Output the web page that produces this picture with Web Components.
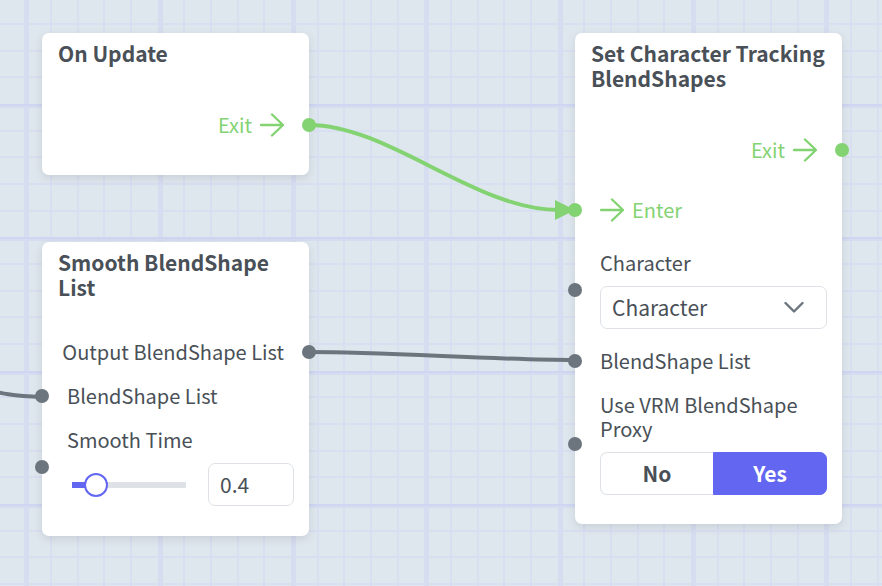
<!DOCTYPE html>
<html lang="en">
<head>
<meta charset="utf-8">
<title>Node graph</title>
<style>
  html, body { height: 100%; margin: 0; }
  body { font-family: "Noto Sans CJK JP", "Noto Sans", sans-serif; font-size: 20px; line-height: 24px; color: #495057; overflow: hidden; }
</style>
</head>
<body>
<graph-canvas>
  <graph-wires slot="wires"></graph-wires>
  <graph-node heading="On Update" style="left:42px;top:33px;height:142px">
    <graph-port side="out" flow>Exit</graph-port>
  </graph-node>
  <graph-node heading="Smooth BlendShape List" style="left:42px;top:242px;height:294px">
    <graph-port side="out">Output BlendShape List</graph-port>
    <graph-port side="in">BlendShape List</graph-port>
    <graph-port side="in">Smooth Time<range-field slot="control" label="Smooth Time" value="0.4" max="3"></range-field></graph-port>
  </graph-node>
  <graph-node heading="Set Character Tracking BlendShapes" style="left:575px;top:33px;height:491px">
    <graph-port side="out" flow>Exit</graph-port>
    <graph-port side="in" flow>Enter</graph-port>
    <graph-port side="in">Character<select-field slot="control" label="Character"></select-field></graph-port>
    <graph-port side="in">BlendShape List</graph-port>
    <graph-port side="in">Use VRM BlendShape Proxy<toggle-field slot="control" label="Use VRM BlendShape Proxy"></toggle-field></graph-port>
  </graph-node>
</graph-canvas>
<script>
  const define = (name, markup, setup) => customElements.define(name, class extends HTMLElement {
    connectedCallback() {
      if (this.shadowRoot) return;
      this.attachShadow({ mode: "open" }).innerHTML = markup;
      if (setup) setup(this, this.shadowRoot);
    }
  });

  // Three grid cells share one tile, so every line stays on a whole pixel.
  const minorColumns = [51, 78, 104, 131, 184, 211, 238, 264, 318, 344, 371, 398];
  const minorRows = [24, 51, 77, 131, 157, 184, 211, 264, 291, 317, 344, 397];
  const grid =
    minorColumns.map(x => `<rect x="${x - 1}" width="2" height="400" fill="#d8dff0"/>`).join("") +
    minorRows.map(y => `<rect y="${y - 1}" width="400" height="2" fill="#d8dff0"/>`).join("") +
    [24, 158, 291].map(x => `<rect x="${x}" width="5" height="400" fill="#d6ddf0"/>`).join("") +
    [104, 237, 371].map(y => `<rect y="${y}" width="400" height="4" fill="#d6ddf1"/><rect y="${y}" width="400" height="2" fill="#ced6f1"/>`).join("");

  define("graph-canvas", `
    <style>
      :host { display: block; position: relative; height: 100%; overflow: hidden; background: #dfe7ee; }
      .grid { position: absolute; inset: 0; width: 100%; height: 100%; }
    </style>
    <svg class="grid" aria-hidden="true"><defs><pattern id="g" width="400" height="400" patternUnits="userSpaceOnUse">${grid}</pattern></defs><rect width="100%" height="100%" fill="url(#g)"/></svg>
    <slot></slot><slot name="wires"></slot>`);

  define("graph-wires", `
    <style>
      :host { position: absolute; inset: 0; z-index: 1; pointer-events: none; }
      svg { width: 100%; height: 100%; display: block; }
      path { fill: none; stroke-width: 4; }
      .tip { fill: #84d373; }
    </style>
    <svg aria-hidden="true">
      <path d="M309 125C389 125 475 210 559 210" stroke="#84d373"/>
      <path class="tip" d="M555 200L575 210L555 220Z"/>
      <path d="M309 352C389 352 495 360 575 360" stroke="#6c757d"/>
      <path d="M-20 388C0 393 10 396 42 397" stroke="#6c757d"/>
    </svg>`);

  define("graph-node", `
    <style>
      :host { position: absolute; box-sizing: border-box; width: 267px; background: #fff; border-radius: 7px; box-shadow: 0 3px 8px #6c757d33; }
      h2 { margin: 0; padding: 8px 12px 40px 16px; font-size: 21px; line-height: 25px; font-weight: 700; }
      .ports { display: flex; flex-direction: column; gap: 20px; }
    </style>
    <h2></h2><div class="ports"><slot></slot></div>`,
    (host, root) => { root.querySelector("h2").textContent = host.getAttribute("heading"); });

  define("graph-port", `
    <style>
      :host { display: block; position: relative; padding: 0 15px 0 25px; --dot: #6c757d; }
      :host([side=out]) { padding-right: 25px; padding-left: 15px; }
      :host([flow]) { color: #84d373; --dot: #84d373; }
      :host([flow][side=out]) { margin-top: 7px; }
      :host([flow][side=in]) { margin: 16px 0 9px; }
      .label { display: flex; align-items: center; gap: 8px; }
      :host([side=out]) .label { justify-content: flex-end; }
      :host([side=out][flow]) .label { flex-direction: row-reverse; justify-content: flex-start; }
      svg { display: none; width: 24px; height: 24px; fill: none; stroke: currentColor; stroke-width: 2.4; stroke-linecap: round; stroke-linejoin: round; }
      :host([flow]) svg { display: block; }
      .dot { position: absolute; left: -7px; top: calc(50% - 7px); width: 14px; height: 14px; border-radius: 50%; background: var(--dot); z-index: 2; }
      :host([side=out]) .dot { left: auto; right: -7px; }
    </style>
    <div class="label"><svg viewBox="0 0 24 24" aria-hidden="true"><path d="M1 12H23M12 1.500L23 12L12 22.500"/></svg><span><slot></slot></span></div>
    <slot name="control"></slot><span class="dot"></span>`);

  const box = "box-sizing: border-box; height: 43px; border: 1px solid #dee2e6; border-radius: 7px; background: #fff; color: inherit; font: inherit; font-size: 21px; outline: 0;";

  define("range-field", `
    <style>
      :host { display: flex; align-items: center; justify-content: space-between; margin-top: 11px; padding-left: 5px; }
      input { margin: 0; }
      .range { appearance: none; width: 114px; height: 24px; background: linear-gradient(90deg, #6366f1 20%, #dee2e6 20%) center / 100% 6px no-repeat; }
      .range::-webkit-slider-thumb { appearance: none; box-sizing: border-box; width: 24px; height: 24px; border: 2px solid #6366f1; border-radius: 50%; background: #fff; }
      .number { ${box} width: 86px; padding: 0 11px 2px; }
    </style>
    <input class="range" type="range" min="0" step="0.1"><input class="number" type="text" inputmode="decimal">`,
    (host, root) => {
      const [range, number] = root.querySelectorAll("input");
      range.max = host.getAttribute("max");
      range.value = number.value = host.getAttribute("value");
      range.ariaLabel = number.ariaLabel = host.getAttribute("label");
      range.oninput = () => { number.value = range.value; };
    });

  define("select-field", `
    <style>
      :host { display: block; position: relative; margin-top: 11px; }
      select { ${box} display: block; appearance: none; width: 100%; padding: 0 48px 2px 11px; }
      svg { position: absolute; right: 23px; top: 14px; width: 20px; height: 14px; fill: none; stroke: #6c757d; stroke-width: 2.4; stroke-linecap: round; stroke-linejoin: round; pointer-events: none; }
    </style>
    <select><option>Character</option></select><svg viewBox="0 0 20 14" aria-hidden="true"><path d="M1.5 3L10 11.5L18.5 3"/></svg>`,
    (host, root) => { root.querySelector("select").ariaLabel = host.getAttribute("label"); });

  define("toggle-field", `
    <style>
      :host { display: flex; margin-top: 11px; }
      button { ${box} flex: 1; padding: 0 0 2px; font-weight: 700; }
      button:first-of-type { border-radius: 7px 0 0 7px; border-right: 0; }
      button:last-of-type { border-radius: 0 7px 7px 0; }
      button[aria-pressed=true] { background: #6366f1; border-color: #6366f1; color: #fff; }
    </style>
    <button type="button" aria-pressed="false">No</button><button type="button" aria-pressed="true">Yes</button>`,
    (host, root) => {
      const buttons = [...root.querySelectorAll("button")];
      buttons.forEach(b => b.onclick = () => buttons.forEach(o => o.setAttribute("aria-pressed", o === b)));
    });
</script>
</body>
</html>
